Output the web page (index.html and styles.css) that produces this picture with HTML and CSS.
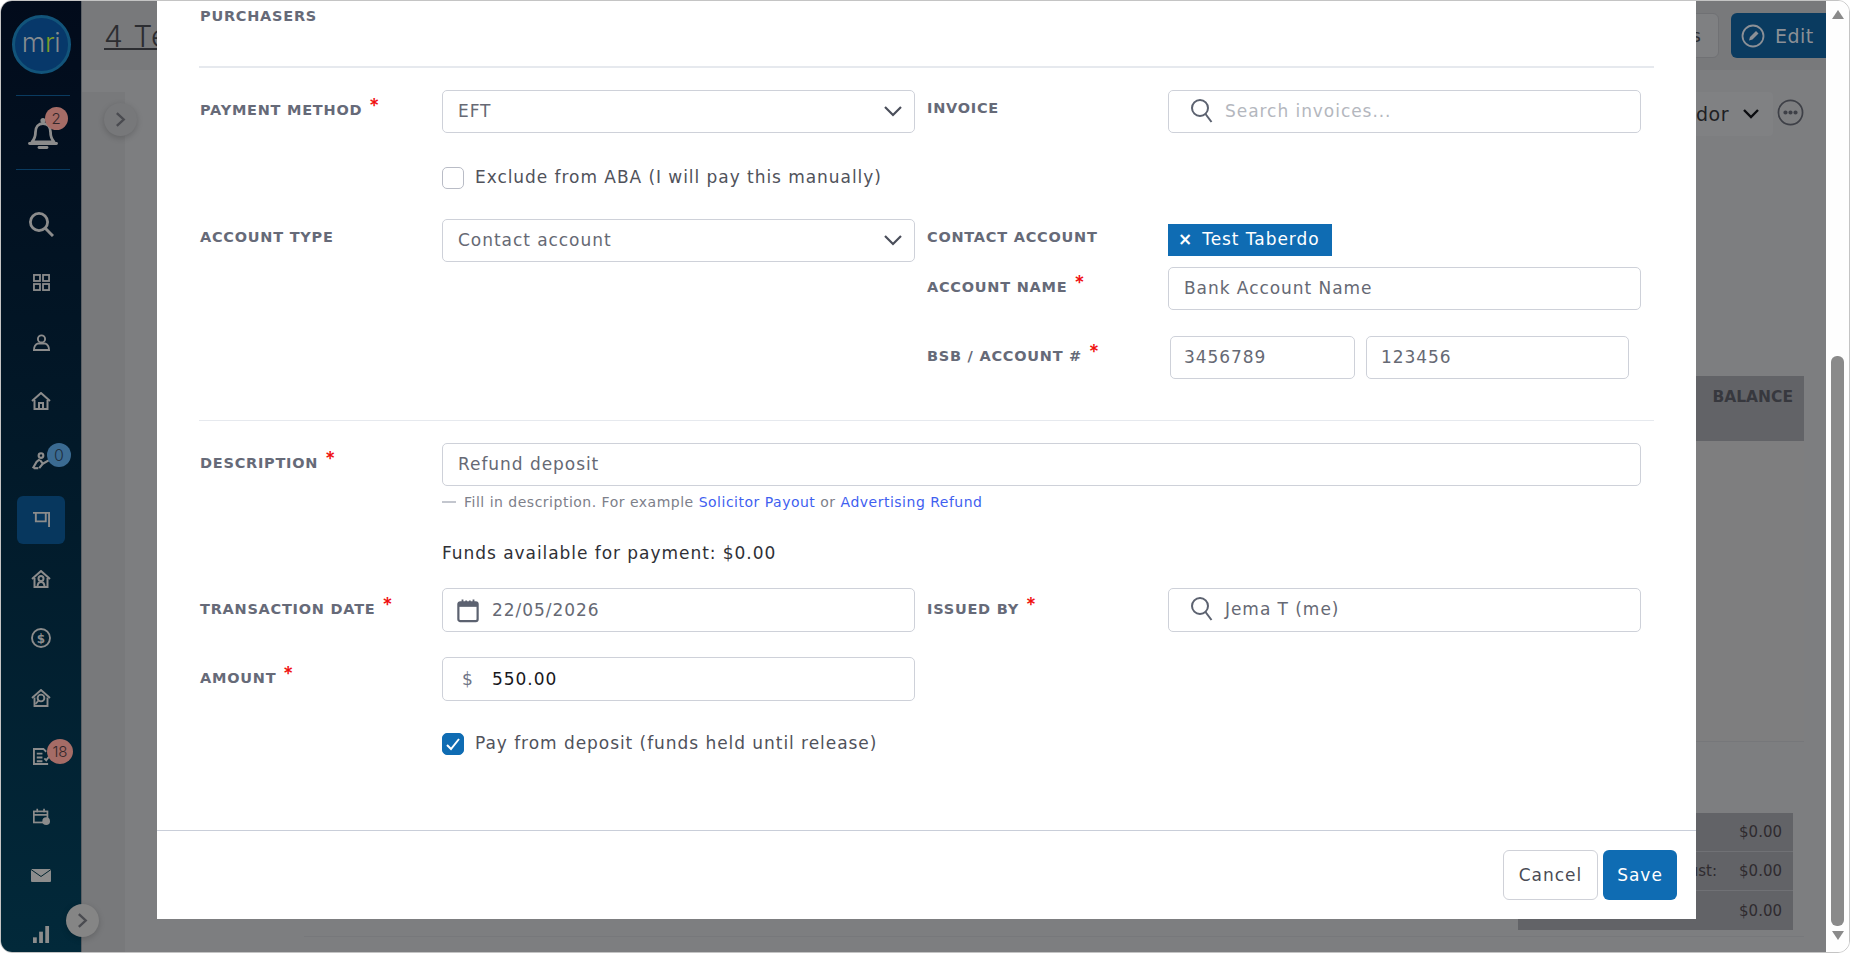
FILE: index.html
```html
<!DOCTYPE html>
<html lang="en">
<head>
<meta charset="utf-8">
<title>Payment</title>
<link rel="stylesheet" href="styles.css">
</head>
<body>
<div class="window">
  <aside class="sidebar">
    <div class="logo"><span class="logo-text">m<span class="logo-r">r</span>i</span></div>
    <div class="bell-box">
      <svg class="ic-bell" viewBox="0 0 30 34"><path d="M4 26c2.500-3 3.500-5 3.500-10 0-5 3-8.500 7.500-8.500s7.500 3.500 7.500 8.500c0 5 1 7 3.500 10z" fill="none" stroke="#8c8c8c" stroke-width="2.800" stroke-linejoin="round"/><path d="M1.500 27.500h27" stroke="#8c8c8c" stroke-width="2.800" stroke-linecap="round"/><path d="M11 31.500h8" stroke="#8c8c8c" stroke-width="2.800" stroke-linecap="round"/><circle cx="15" cy="4.500" r="2.600" fill="#8c8c8c"/></svg>
      <span class="badge badge-red badge-bell">2</span>
    </div>
    <nav class="nav">
      <div class="nav-item"><svg class="ic-search" viewBox="0 0 26 26"><circle cx="11" cy="11" r="8.600" fill="none" stroke="#8c8c8c" stroke-width="2.800"/><path d="M17 17l8 8" stroke="#8c8c8c" stroke-width="3"/></svg></div>
      <div class="nav-item"><svg class="ic" viewBox="0 0 18 18" fill="none" stroke="#8c8c8c" stroke-width="1.900"><rect x="1" y="1" width="6.400" height="6.400"/><rect x="10.600" y="1" width="6.400" height="6.400"/><rect x="1" y="10.600" width="6.400" height="6.400"/><rect x="10.600" y="10.600" width="6.400" height="6.400"/></svg></div>
      <div class="nav-item"><svg class="ic" viewBox="0 0 18 18" fill="none" stroke="#8c8c8c" stroke-width="2"><circle cx="9" cy="5.200" r="3.800"/><path d="M1 17c0-3 1.500-6 4.500-7h7c3 1 4.500 4 4.500 7z"/></svg></div>
      <div class="nav-item"><svg class="ic-lg" viewBox="0 0 20 18" fill="none" stroke="#8c8c8c" stroke-width="2"><path d="M1 9l9-8 9 8"/><path d="M3.500 8v9h13V8"/><path d="M8 17v-6h4v6"/></svg></div>
      <div class="nav-item"><svg class="ic-lg" viewBox="0 0 20 20" fill="none" stroke="#8c8c8c" stroke-width="2.400"><circle cx="10" cy="4" r="2.600"/><path d="M8.500 8L5 11l-4 7M9 9l3 4-4 5M12 13l7-4"/><path d="M2 18h5"/></svg><span class="badge badge-blue badge-zero">0</span></div>
      <div class="nav-item nav-active"><svg class="ic" viewBox="0 0 18 18" fill="none" stroke="#8c8c8c" stroke-width="2"><path d="M0 2h17v15"/><path d="M3 2v9h10.500V2"/></svg></div>
      <div class="nav-item"><svg class="ic-lg" viewBox="0 0 20 18" fill="none" stroke="#8c8c8c" stroke-width="2"><path d="M1 9l9-8 9 8"/><path d="M3.500 8v9h13V8"/><circle cx="10" cy="8.500" r="2.500"/><path d="M6.500 17c0-3 1.500-5 3.500-5s3.500 2 3.500 5"/></svg></div>
      <div class="nav-item"><svg class="ic-xl" viewBox="0 0 20 20"><circle cx="10" cy="10" r="9" fill="none" stroke="#8c8c8c" stroke-width="1.900"/><text class="dollar" x="10" y="14.500">$</text></svg></div>
      <div class="nav-item"><svg class="ic-lg" viewBox="0 0 20 18" fill="none" stroke="#8c8c8c" stroke-width="1.900"><path d="M1 9l9-8 9 8"/><path d="M3.500 8.500V17h13V8.500"/><circle cx="10" cy="9" r="3.400"/><path d="M7.500 11.500L4.500 15"/></svg></div>
      <div class="nav-item"><svg class="ic" viewBox="0 0 18 18" fill="none" stroke="#8c8c8c" stroke-width="2"><path d="M16 17H1V1h10l3 3"/><path d="M4 6h6M4 10h6M4 14h6M12 11l2 2 3-4"/></svg><span class="badge badge-red badge-tasks">18</span></div>
      <div class="nav-item"><svg class="ic" viewBox="0 0 20 20"><rect x="1" y="4" width="16" height="13" fill="none" stroke="#8c8c8c" stroke-width="2"/><path d="M1 8h16M5 1v4M13 1v4" stroke="#8c8c8c" stroke-width="2"/><circle cx="15.500" cy="15.500" r="4.500" fill="#8c8c8c"/></svg></div>
      <div class="nav-item"><svg class="ic-mail" viewBox="0 0 20 13"><rect width="20" height="13" rx="1" fill="#8c8c8c"/><path d="M0 .5l10 7 10-7" fill="none" stroke="#02242f" stroke-width="1"/></svg></div>
      <div class="nav-item"><svg class="ic" viewBox="0 0 18 18" fill="#8c8c8c"><rect x="0" y="12" width="4" height="6"/><rect x="6.500" y="6" width="4" height="12"/><rect x="13" y="0" width="4" height="18"/></svg></div>
    </nav>
  </aside>

  <main class="page">
    <header class="topbar">
      <h1 class="title">4 Test</h1>
      <div class="actions">
        <span class="ghost-btn">Actions</span>
        <span class="edit-btn"><svg class="ic-edit" viewBox="0 0 24 24" fill="none" stroke="#8c9096" stroke-width="1.800"><circle cx="12" cy="12" r="10.500"/><path d="M8 16.500l1-3.500 6-6 2.500 2.500-6 6z" fill="#8c9096" stroke="none"/></svg>Edit</span>
      </div>
    </header>
    <div class="content">
      <div class="strip"></div>
      <div class="work">
        <div class="toolbar">
          <span class="vendor">Vendor<svg class="vendor-chev" viewBox="0 0 16 10" fill="none" stroke="#0b0c10" stroke-width="2.400"><path d="M1 1l7 7 7-7"/></svg></span>
          <svg class="ic-more" viewBox="0 0 28 28" fill="none" stroke="#3e4047" stroke-width="1.800"><circle cx="14" cy="14" r="12.500"/><circle cx="8.800" cy="14" r="1.300" fill="#3e4047"/><circle cx="14" cy="14" r="1.300" fill="#3e4047"/><circle cx="19.200" cy="14" r="1.300" fill="#3e4047"/></svg>
        </div>
        <section class="ledger">
          <div class="ledger-head">BALANCE</div>
        </section>
        <div class="summary">
          <div class="summary-row"><span class="summary-amt">$0.00</span></div>
          <div class="summary-row"><span>ust:</span><span class="summary-amt">$0.00</span></div>
          <div class="summary-row"><span class="summary-amt">$0.00</span></div>
        </div>
        <div class="foot-line"></div>
      </div>
    </div>
  </main>

  <div class="scrollbar">
    <span class="arrow-up"></span>
    <span class="thumb"></span>
    <span class="arrow-down"></span>
  </div>

  <button class="side-toggle toggle-top"><svg class="chev-right" viewBox="0 0 12 18" fill="none" stroke="#4a4b50" stroke-width="2.600"><path d="M2 2l7.500 7L2 16"/></svg></button>
  <button class="side-toggle toggle-bottom"><svg class="chev-right" viewBox="0 0 12 18" fill="none" stroke="#4a4b50" stroke-width="2.600"><path d="M2 2l7.500 7L2 16"/></svg></button>

  <div class="modal">
    <div class="modal-body">
      <div class="purchasers label">PURCHASERS</div>
      <hr class="rule rule-thick">

      <div class="columns first-row">
        <div class="half">
          <div class="label">PAYMENT METHOD <span class="req">*</span></div>
          <div class="input select">EFT<svg class="chev" viewBox="0 0 18 11" fill="none" stroke="#4a4e5a" stroke-width="2.200"><path d="M1 1l8 8 8-8"/></svg></div>
        </div>
        <div class="half half-r">
          <div class="label label-tight">INVOICE</div>
          <div class="input with-icon placeholder"><svg class="ic-find" viewBox="0 0 24 26" fill="none" stroke="#5c6270" stroke-width="2"><circle cx="10" cy="10" r="8"/><path d="M15.500 16l6 8"/></svg>Search invoices...</div>
        </div>
      </div>

      <div class="check-row exclude"><span class="checkbox"></span><span class="check-text">Exclude from ABA (I will pay this manually)</span></div>

      <div class="columns third-row">
        <div class="half half-top">
          <div class="label label-tight">ACCOUNT TYPE</div>
          <div class="input select">Contact account<svg class="chev" viewBox="0 0 18 11" fill="none" stroke="#4a4e5a" stroke-width="2.200"><path d="M1 1l8 8 8-8"/></svg></div>
        </div>
        <div class="stack">
          <div class="half half-r">
            <div class="label label-tight">CONTACT ACCOUNT</div>
            <div class="chip-cell"><span class="chip"><span class="chip-x">×</span>Test Taberdo</span></div>
          </div>
          <div class="half half-r account-name">
            <div class="label">ACCOUNT NAME <span class="req">*</span></div>
            <div class="input">Bank Account Name</div>
          </div>
          <div class="half half-r bsb-row">
            <div class="label">BSB / ACCOUNT # <span class="req">*</span></div>
            <div class="bsb"><div class="input bsb-a">3456789</div><div class="input bsb-b">123456</div></div>
          </div>
        </div>
      </div>

      <hr class="rule rule-thin">

      <div class="half half-wide">
        <div class="label">DESCRIPTION <span class="req">*</span></div>
        <div class="input">Refund deposit</div>
      </div>
      <div class="help"><span class="help-dash"></span>Fill in description. For example <a class="link">Solicitor Payout</a> or <a class="link">Advertising Refund</a></div>
      <div class="funds">Funds available for payment: $0.00</div>

      <div class="columns date-row">
        <div class="half">
          <div class="label label-low">TRANSACTION DATE <span class="req">*</span></div>
          <div class="input tall with-prefix"><svg class="ic-cal" viewBox="0 0 24 26"><path d="M6 1v5M10 2v4M14 2v4M18 1v5" stroke="#5c6270" stroke-width="2"/><rect x="1.500" y="4" width="21" height="20.500" rx="2" fill="none" stroke="#5c6270" stroke-width="2.400"/><rect x="1.500" y="4" width="21" height="5" fill="#5c6270"/></svg>22/05/2026</div>
        </div>
        <div class="half half-r">
          <div class="label label-low">ISSUED BY <span class="req">*</span></div>
          <div class="input tall with-icon"><svg class="ic-find" viewBox="0 0 24 26" fill="none" stroke="#5c6270" stroke-width="2"><circle cx="10" cy="10" r="8"/><path d="M15.500 16l6 8"/></svg>Jema T (me)</div>
        </div>
      </div>

      <div class="half amount-row">
        <div class="label label-low">AMOUNT <span class="req">*</span></div>
        <div class="input tall with-prefix amount"><span class="currency">$</span>550.00</div>
      </div>

      <div class="check-row deposit"><span class="checkbox checked"><svg class="ic-tick" viewBox="0 0 16 14" fill="none" stroke="#fff" stroke-width="2"><path d="M2 8l4 4 8-10"/></svg></span><span class="check-text">Pay from deposit (funds held until release)</span></div>
    </div>
    <footer class="modal-footer">
      <button class="btn btn-cancel">Cancel</button>
      <button class="btn btn-save">Save</button>
    </footer>
  </div>
</div>
</body>
</html>
```

FILE: styles.css
```css
* { box-sizing: border-box; }
html, body { margin: 0; height: 100%; overflow: hidden; }
body { background: #fff; font-family: "DejaVu Sans", "Liberation Sans", sans-serif; }

.window {
  position: relative;
  height: 953px;
  display: flex;
  border: 1px solid #c4c4c4;
  border-radius: 12px;
  overflow: hidden;
  background: #fff;
}

/* sidebar */
.sidebar {
  width: 81px;
  flex: none;
  background: linear-gradient(180deg, #020b1b 0%, #021a2a 50%, #02293a 100%);
  display: flex;
  flex-direction: column;
  align-items: center;
  overflow: hidden;
  border-right: 1px solid #5b5f64;
}
.logo {
  margin-top: 14px;
  width: 59px;
  height: 59px;
  flex: none;
  border-radius: 50%;
  background: #07386a;
  border: 3px solid #12547a;
  display: flex;
  align-items: center;
  justify-content: center;
}
.logo-text { font-family: Inter, sans-serif; font-size: 27px; font-weight: 300; line-height: 1; color: #858b90; letter-spacing: -.5px; margin-top: -5px; }
.logo-r { color: #7f9a2a; }
.bell-box {
  position: relative;
  width: 54px;
  height: 75px;
  margin-top: 21px;
  margin-left: 3px;
  border-top: 1px solid #0a3b60;
  border-bottom: 1px solid #0a3b60;
  display: flex;
  align-items: center;
  justify-content: center;
  flex: none;
}
.ic-bell { width: 30px; height: 34px; }
.badge {
  position: absolute;
  border-radius: 50%;
  display: flex;
  align-items: center;
  justify-content: center;
  color: #33272a;
  font-family: Inter, sans-serif;
  font-weight: 300;
}
.badge-red { background: #a56c66; }
.badge-blue { background: #3b6b92; color: #1e2e3e; }
.badge-bell { width: 23px; height: 23px; right: 2px; top: 11px; font-size: 15px; }
.badge-zero { width: 24px; height: 24px; left: 46px; top: 12px; font-size: 16px; }
.badge-tasks { width: 26px; height: 25px; left: 46px; top: 12px; font-size: 15px; }
.nav {
  margin-top: 24px;
  width: 100%;
  display: grid;
  grid-auto-rows: 59.25px;
  justify-items: center;
  align-items: center;
}
.nav-item { position: relative; width: 100%; height: 100%; display: flex; align-items: center; justify-content: center; }
.nav-active::before {
  content: "";
  position: absolute;
  left: 16px;
  top: 6px;
  width: 48px;
  height: 48px;
  border-radius: 6px;
  background: #07375e;
}
.nav-active svg { position: relative; }
.ic { width: 17px; height: 17px; }
.ic-lg { width: 20px; height: 18px; }
.ic-xl { width: 20px; height: 20px; }
.ic-mail { width: 20px; height: 13px; }
.ic-search { width: 26px; height: 26px; }
.dollar { font-size: 12px; font-weight: 700; fill: #8c8c8c; text-anchor: middle; }

/* background page */
.page {
  flex: 1;
  min-width: 0;
  display: flex;
  flex-direction: column;
  background: #7b7c7e;
  overflow: hidden;
}
.topbar {
  height: 69px;
  flex: none;
  background: #78797b;
  display: flex;
  justify-content: space-between;
  padding: 12px 0 0 22px;
}
.title { margin: 0; font-family: Inter, sans-serif; font-size: 30px; line-height: 46px; font-weight: 300; color: #2c2d31; text-decoration: underline; text-decoration-thickness: 2px; letter-spacing: 1px; white-space: nowrap; }
.actions { display: flex; gap: 12px; height: 45px; }
.ghost-btn { display: flex; align-items: center; padding: 0 17px; background: #7f8082; border: 1px solid #707174; border-radius: 6px; font-size: 18px; color: #2c2d31; }
.edit-btn { display: flex; align-items: center; gap: 10px; width: 95px; padding-left: 10px; background: #0a3b60; border-radius: 6px 0 0 6px; color: #8c9096; font-size: 19px; letter-spacing: .5px; }
.ic-edit { width: 24px; height: 24px; }
.content { flex: 1; display: flex; min-height: 0; background: #7d7e80; }
.strip { width: 43px; flex: none; background: #78797b; margin-top: 22px; }
.work { flex: 1; min-width: 0; padding: 22px 22px 0 0; display: flex; flex-direction: column; align-items: flex-end; }
.toolbar { display: flex; align-items: center; gap: 4px; height: 44px; flex: none; }
.vendor { display: flex; align-items: center; height: 44px; background: #808183; padding: 0 14px 0 10px; border-radius: 4px; font-size: 19px; color: #1e1f23; gap: 14px; letter-spacing: .5px; }
.vendor-chev { width: 16px; height: 10px; }
.ic-more { width: 27px; height: 27px; margin-bottom: 3px; }
.ledger { width: 1500px; height: 366px; margin-top: 240px; background: #7e7e7f; border-bottom: 1px solid #76777a; flex: none; }
.ledger-head { height: 65px; background: #626367; text-align: right; padding: 12px 11px 0 0; font-size: 15.500px; line-height: 18px; font-weight: 700; color: #37383e; }
.summary { width: 275px; margin: 71px 11px 0 0; background: #626367; flex: none; }
.summary-row { height: 39px; display: flex; align-items: center; justify-content: flex-end; padding-right: 11px; gap: 22px; font-size: 15px; color: #2f2b2f; border-bottom: 1px solid #707175; }
.summary-row:last-child { border-bottom: 0; }
.foot-line { width: 1500px; height: 1px; margin-top: 6px; background: #77787b; flex: none; }

/* browser scrollbar */
.scrollbar { width: 23px; flex: none; position: relative; background: #fefefe; display: flex; flex-direction: column; align-items: center; }
.arrow-up { margin-top: 9px; width: 0; height: 0; border-left: 6px solid transparent; border-right: 6px solid transparent; border-bottom: 9px solid #8a8a8a; }
.thumb { margin-top: 337px; width: 13px; height: 570px; background: #8a8a8a; border-radius: 6px; }
.arrow-down { margin-top: 5px; width: 0; height: 0; border-left: 6px solid transparent; border-right: 6px solid transparent; border-top: 9px solid #8a8a8a; }

.side-toggle {
  position: absolute;
  width: 33px;
  height: 33px;
  border-radius: 50%;
  border: 0;
  padding: 0;
  background: #77787a;
  box-shadow: 0 2px 6px rgba(0,0,0,.18);
  display: flex;
  align-items: center;
  justify-content: center;
}
.toggle-top { left: 103px; top: 102px; }
.toggle-bottom { left: 65px; top: 903px; background: #858585; }
.chev-right { width: 11px; height: 17px; }

/* modal */
.modal {
  position: absolute;
  left: 156px;
  top: 0;
  width: 1539px;
  height: 918px;
  background: #fff;
  display: flex;
  flex-direction: column;
  color: #666974;
  font-size: 17px;
  letter-spacing: .95px;
}
.modal-body { flex: 1; padding: 0 42px; min-height: 0; }
.label { font-size: 14.500px; line-height: 20px; font-weight: 700; color: #666a78; padding: 10px 0 0 1px; white-space: nowrap; letter-spacing: .75px; }
.label-tight { padding-top: 8px; }
.label-low { padding-top: 11px; }
.purchasers { padding-top: 5px; height: 65px; }
.req { font-family: Inter, sans-serif; color: #f01010; font-size: 20px; line-height: 0; position: relative; top: -2px; margin-left: 1px; font-weight: 500; }
.rule { border: 0; margin: 0; }
.rule-thick { height: 2px; background: #e6e9ee; }
.rule-thin { height: 1px; background: #e6e9ee; margin-top: 41px; }
.columns { display: flex; }
.half { display: grid; grid-template-columns: 243px 473px; }
.half-r { grid-template-columns: 253px 473px; }
.half-r .label { padding-left: 12px; }
.half-top { align-self: flex-start; }
.half-wide { grid-template-columns: 243px 1199px; margin-top: 22px; }
.first-row { margin-top: 22px; }
.third-row { margin-top: 30px; }
.stack { display: flex; flex-direction: column; }
.account-name { margin-top: 11px; }
.bsb-row { margin-top: 26px; }
.input {
  position: relative;
  height: 43px;
  border: 1px solid #ced1d9;
  border-radius: 5px;
  display: flex;
  align-items: center;
  padding: 0 0 2px 15px;
  white-space: nowrap;
  background: #fff;
}
.tall { height: 44px; }
.select { justify-content: space-between; padding-right: 12px; }
.chev { width: 18px; height: 11px; margin-top: 2px; }
.with-icon { padding-left: 21px; gap: 11px; }
.with-prefix { padding: 0 0 0 14px; gap: 13px; }
.placeholder { color: #b4b7be; }
.ic-find { width: 24px; height: 26px; flex: none; }
.ic-cal { width: 22px; height: 25px; flex: none; }
.currency { width: 22px; flex: none; text-align: center; color: #6f7585; }
.amount { color: #17181c; }
.chip-cell { padding-top: 5px; height: 37px; }
.chip { display: inline-flex; align-items: center; height: 32px; width: 164px; padding: 0 0 2px 10px; gap: 9px; background: #0f6cb3; color: #fff; }
.chip-x { font-size: 17px; font-weight: 700; line-height: 1; }
.bsb { display: flex; gap: 11px; margin-left: 2px; }
.bsb-a { width: 185px; padding-left: 13px; }
.bsb-b { width: 263px; padding-left: 14px; }
.check-row { display: flex; align-items: center; gap: 11px; margin-left: 243px; height: 22px; color: #50525b; white-space: nowrap; }
.check-text { margin-top: -2px; }
.exclude { margin-top: 34px; }
.deposit { margin-top: 32px; }
.checkbox { width: 22px; height: 22px; border: 1px solid #b9bcc6; border-radius: 5px; background: #fff; flex: none; display: flex; align-items: center; justify-content: center; }
.checked { background: #0f6cb3; border-color: #0f6cb3; }
.ic-tick { width: 16px; height: 14px; }
.help { margin: 6px 0 0 243px; height: 20px; display: flex; align-items: center; font-size: 14px; color: #7d808a; letter-spacing: .5px; white-space: pre; }
.help-dash { width: 14px; height: 2px; background: #c3c6ce; margin-right: 8px; }
.link { color: #3f5ff0; }
.funds { margin: 31px 0 0 243px; line-height: 20px; color: #2f3036; }
.date-row { margin-top: 25px; }
.amount-row { margin-top: 25px; }
.modal-footer {
  height: 89px;
  flex: none;
  border-top: 1px solid #c9ced9;
  display: flex;
  justify-content: flex-end;
  align-items: flex-start;
  gap: 5px;
  padding: 19px 19px 0 0;
}
.btn { height: 50px; border-radius: 6px; font-family: inherit; font-size: 17px; letter-spacing: 1px; }
.btn-cancel { width: 95px; background: #fff; border: 1px solid #cfd1d8; color: #4b4c55; }
.btn-save { width: 74px; background: #0f6cb3; border: 0; color: #fff; }
```
